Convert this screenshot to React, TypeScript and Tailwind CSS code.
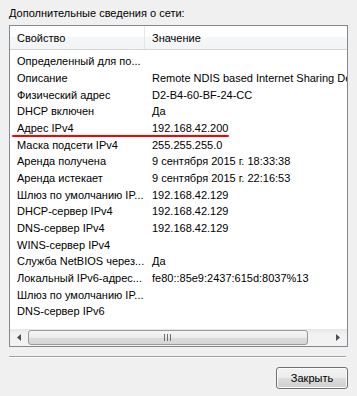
import React from "react";

const rows: [string, string][] = [
  ["Определенный для по...", ""],
  ["Описание", "Remote NDIS based Internet Sharing Device"],
  ["Физический адрес", "D2-B4-60-BF-24-CC"],
  ["DHCP включен", "Да"],
  ["Адрес IPv4", "192.168.42.200"],
  ["Маска подсети IPv4", "255.255.255.0"],
  ["Аренда получена", "9 сентября 2015 г. 18:33:38"],
  ["Аренда истекает", "9 сентября 2015 г. 22:16:53"],
  ["Шлюз по умолчанию IP...", "192.168.42.129"],
  ["DHCP-сервер IPv4", "192.168.42.129"],
  ["DNS-сервер IPv4", "192.168.42.129"],
  ["WINS-сервер IPv4", ""],
  ["Служба NetBIOS через...", "Да"],
  ["Локальный IPv6-адрес...", "fe80::85e9:2437:615d:8037%13"],
  ["Шлюз по умолчанию IP...", ""],
  ["DNS-сервер IPv6", ""],
];

export default function App() {
  return (
    <div
      className="relative w-[357px] h-[396px] bg-[#f0f0f0] text-[11px] text-black overflow-hidden"
      style={{ fontFamily: '"Liberation Sans", Arial, sans-serif' }}
    >
      <div className="pl-[9px] pt-[6px] leading-[14px] h-[20px]">
        Дополнительные сведения о сети:
      </div>
      <div className="relative ml-[9px] mt-[5px] w-[339px] h-[322px] border border-[#828790] bg-white flex flex-col">
        {/* header */}
        <div className="flex h-[24px] border-b border-[#d5d5d5] bg-[linear-gradient(to_bottom,#ffffff_0%,#ffffff_45%,#f6f7f9_50%,#f3f4f6_100%)]">
          <div className="w-[135px] border-r border-[#e3e5e8] pl-[7px] flex items-center leading-[14px]">
            Свойство
          </div>
          <div className="flex-1 pl-[7px] flex items-center leading-[14px]">
            Значение
          </div>
        </div>
        {/* rows */}
        <div className="relative flex-1 pt-[3px] overflow-hidden">
          {rows.map(([k, v], i) => (
            <div key={i} className="flex h-[16.67px] items-center leading-[14px] whitespace-nowrap">
              <div className="w-[135px] pl-[7px] overflow-hidden">{k}</div>
              <div className="flex-1 pl-[7px] overflow-hidden">{v}</div>
            </div>
          ))}
          <div className="absolute left-[2px] top-[85px] w-[217px] h-[2px] bg-[#ff0000] rounded-full" />
        </div>
        {/* horizontal scrollbar */}
        <div className="flex h-[17px] bg-[linear-gradient(to_bottom,#e6e6e6,#f2f2f2_30%,#f2f2f2)]">
          <div className="w-[18px] flex items-center justify-center">
            <svg width="4" height="7" viewBox="0 0 4 7">
              <path d="M4 0 L0 3.5 L4 7 Z" fill="#4d4d4d" />
            </svg>
          </div>
          <div className="w-[280px] my-[1px] rounded-[3px] border border-[#9b9b9b] bg-[linear-gradient(to_bottom,#f6f6f6,#ececec_50%,#dcdcdc_51%,#d6d6d6)] flex items-center justify-center">
            <svg width="8" height="7" viewBox="0 0 8 7">
              <path d="M0.5 0 V7 M3.5 0 V7 M6.5 0 V7" stroke="#6d6d6d" strokeWidth="1" />
            </svg>
          </div>
          <div className="flex-1" />
          <div className="w-[18px] flex items-center justify-center">
            <svg width="4" height="7" viewBox="0 0 4 7">
              <path d="M0 0 L4 3.5 L0 7 Z" fill="#4d4d4d" />
            </svg>
          </div>
        </div>
      </div>
      {/* separator */}
      <div className="ml-[9px] mt-[9px] w-[337px] h-[2px] border-t border-[#a0a0a0] border-b border-b-white" />
      <div className="flex justify-end pr-[9px] mt-[9px]">
        <button
          className="w-[72px] h-[22px] rounded-[3px] border border-[#707070] bg-[linear-gradient(to_bottom,#f2f2f2,#ebebeb_50%,#dddddd_51%,#cfcfcf)] shadow-[inset_0_0_0_1px_#fcfcfc] flex items-center justify-center leading-[14px] text-[11px]"
          style={{ fontFamily: '"Liberation Sans", Arial, sans-serif' }}
        >
          Закрыть
        </button>
      </div>
    </div>
  );
}
